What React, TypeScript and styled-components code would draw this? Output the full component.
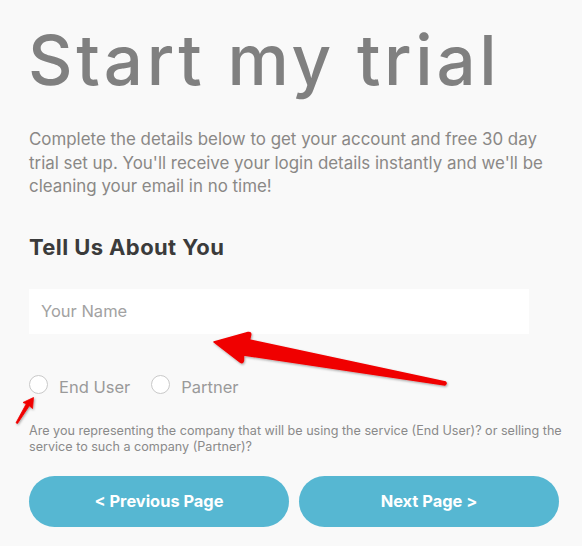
import React from "react";
import styled, { createGlobalStyle } from "styled-components";

const Global = createGlobalStyle`
  html, body {
    margin: 0;
    padding: 0;
    background: #f9f9f9;
  }
  body {
    font-family: Inter, "Noto Sans", sans-serif;
  }
  * { box-sizing: border-box; }
`;

const Page = styled.div`
  position: relative;
  width: 582px;
  height: 546px;
  overflow: hidden;
  padding: 20px 0 0 29px;
`;

const Column = styled.div`
  width: 536px;
  display: flex;
  flex-direction: column;
`;

const Title = styled.h1`
  margin: 0;
  margin-left: -1px;
  font-family: Inter, sans-serif;
  font-weight: 500;
  font-size: 69px;
  line-height: 80px;
  letter-spacing: 3.7px;
  color: #808080;
  white-space: nowrap;
`;

const Intro = styled.p`
  margin: 28px 0 0;
  width: 520px;
  font-size: 16.9px;
  line-height: 23.5px;
  color: #8a8886;
`;

const SectionTitle = styled.h2`
  margin: 34px 0 0;
  font-size: 22px;
  line-height: 28px;
  font-weight: 700;
  letter-spacing: 0.4px;
  color: #3b3b3b;
`;

const NameInput = styled.input`
  margin-top: 28px;
  width: 500px;
  height: 45px;
  border: none;
  outline: none;
  background: #ffffff;
  padding: 0 12px;
  font-family: Inter, sans-serif;
  font-size: 16.5px;
  color: #555;
  &::placeholder {
    color: #a2a2a2;
  }
`;

const RadioRow = styled.div`
  margin-top: 41px;
  display: flex;
  align-items: flex-start;
  gap: 21px;
`;

const RadioOption = styled.label`
  display: flex;
  align-items: flex-start;
  gap: 11px;
  cursor: pointer;
`;

const RadioCircle = styled.span`
  width: 19px;
  height: 19px;
  border-radius: 50%;
  background: #ffffff;
  border: 1px solid #c9c9c9;
  flex: none;
`;

const RadioLabel = styled.span`
  padding-top: 2px;
  font-size: 16.5px;
  line-height: 20px;
  color: #9a9a9a;
`;

const Help = styled.p`
  margin: 26px 0 0;
  font-size: 12.6px;
  line-height: 16.5px;
  color: #8a8a8a;
`;

const ButtonRow = styled.div`
  margin-top: 20px;
  display: grid;
  grid-template-columns: 260px 260px;
  gap: 10px;
`;

const PageButton = styled.button`
  height: 51px;
  border: none;
  border-radius: 26px;
  background: #56b7d2;
  color: #ffffff;
  font-family: Inter, sans-serif;
  font-weight: 700;
  font-size: 16.4px;
  cursor: pointer;
`;

const Annotations = styled.svg`
  position: absolute;
  left: 0;
  top: 0;
  width: 582px;
  height: 546px;
  pointer-events: none;
  overflow: visible;
`;

export default function App() {
  return (
    <>
      <Global />
      <Page>
        <Column>
          <Title>Start my trial</Title>
          <Intro>
            Complete the details below to get your account and free 30 day
            trial set up. You'll receive your login details instantly and we'll
            be cleaning your email in no time!
          </Intro>
          <SectionTitle>Tell Us About You</SectionTitle>
          <NameInput placeholder="Your Name" />
          <RadioRow>
            <RadioOption>
              <RadioCircle />
              <RadioLabel>End User</RadioLabel>
            </RadioOption>
            <RadioOption>
              <RadioCircle />
              <RadioLabel>Partner</RadioLabel>
            </RadioOption>
          </RadioRow>
          <Help>
            Are you representing the company that will be using the service
            (End User)? or selling the service to such a company (Partner)?
          </Help>
          <ButtonRow>
            <PageButton>&lt; Previous Page</PageButton>
            <PageButton>Next Page &gt;</PageButton>
          </ButtonRow>
        </Column>
        <Annotations viewBox="0 0 582 546">
          <defs>
            <filter id="arrowShadow" x="-10%" y="-10%" width="130%" height="140%">
              <feDropShadow dx="0.8" dy="1.2" stdDeviation="0.8" floodColor="#000" floodOpacity="0.35" />
            </filter>
          </defs>
          <path
            d="M214 342 L248 332.5 Q251.5 332 250.5 335.5 L249.5 340 L445.5 382 Q447 383.5 445 385 L243.5 355 L243.5 360.5 Q243 364 240 362 Z"
            fill="#f00000"
            stroke="#f00000"
            strokeWidth="1.5"
            strokeLinejoin="round"
            filter="url(#arrowShadow)"
          />
          <path
            d="M33.5 397.5 L32.5 408.5 L29.3 405.8 L17.5 423.5 L16 422.8 L26.3 403.8 L23 402.5 Z"
            fill="#f00000"
            stroke="#f00000"
            strokeWidth="0.8"
            strokeLinejoin="round"
            filter="url(#arrowShadow)"
          />
        </Annotations>
      </Page>
    </>
  );
}
